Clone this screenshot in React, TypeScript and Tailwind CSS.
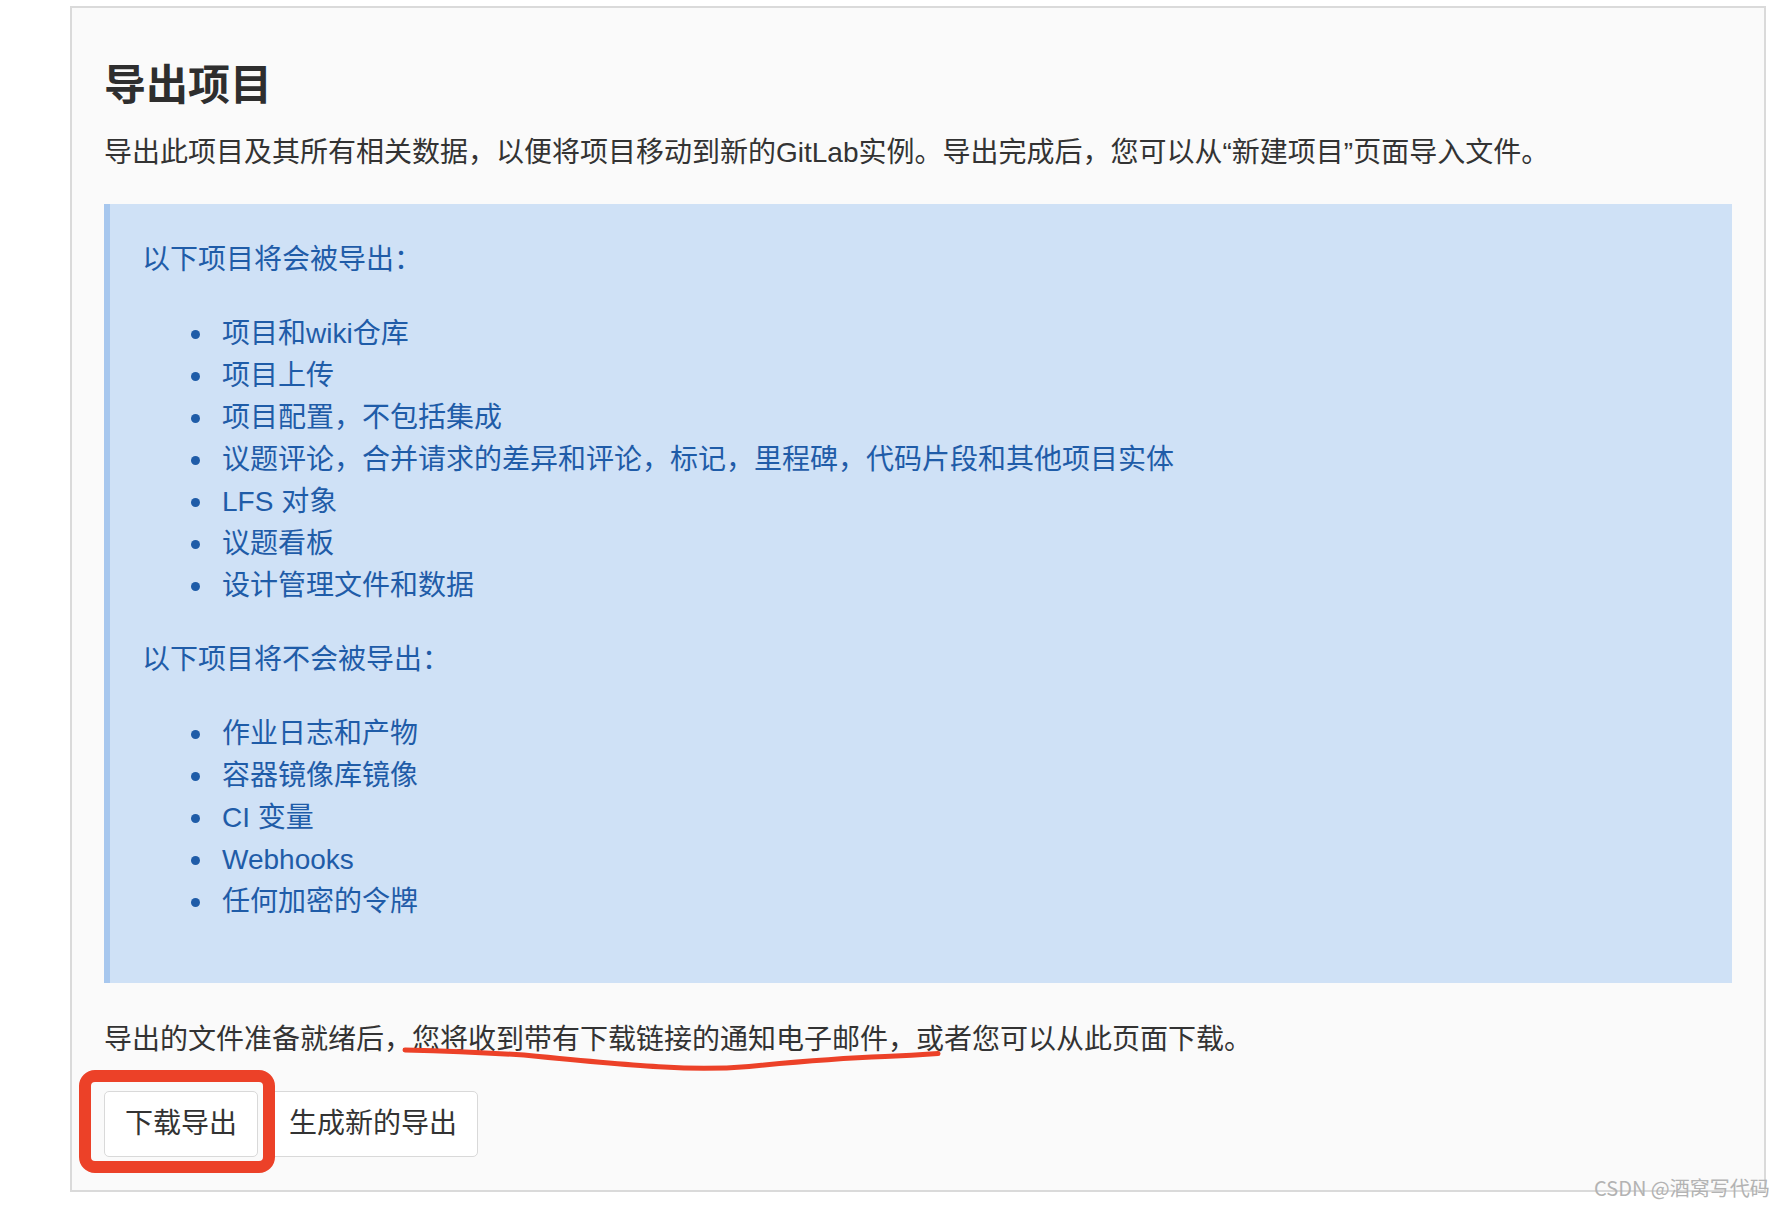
import React from "react";

const FONT = '"Liberation Sans", "Noto Sans CJK SC", sans-serif';

const exported = [
  "项目和wiki仓库",
  "项目上传",
  "项目配置，不包括集成",
  "议题评论，合并请求的差异和评论，标记，里程碑，代码片段和其他项目实体",
  "LFS 对象",
  "议题看板",
  "设计管理文件和数据",
];

const notExported = ["作业日志和产物", "容器镜像库镜像", "CI 变量", "Webhooks", "任何加密的令牌"];

function BulletList({ items }: { items: string[] }) {
  return (
    <ul className="mb-[32px]">
      {items.map((t) => (
        <li key={t} className="flex items-center h-[42px] leading-[42px]">
          <span className="ml-[49px] w-[9px] h-[9px] rounded-full bg-[#1f5ca8] shrink-0" />
          <span className="ml-[22px] whitespace-nowrap">{t}</span>
        </li>
      ))}
    </ul>
  );
}

export default function App() {
  return (
    <div className="relative w-[1782px] h-[1206px] bg-white" style={{ fontFamily: FONT }}>
      <div className="ml-[70px] mt-[6px] w-[1696px] border-2 border-[#dadada] bg-[#fafafa] pl-[32px] pr-[32px] pt-[54px] pb-[33px]">
        <h1 className="text-[42px] leading-[48px] font-bold text-[#2e2e2e]">导出项目</h1>
        <p className="mt-[22px] text-[28px] leading-[42px] text-[#333] whitespace-nowrap">
          导出此项目及其所有相关数据，以便将项目移动到新的GitLab实例。导出完成后，您可以从“新建项目”页面导入文件。
        </p>

        <div className="mt-[30px] bg-[#cfe1f6] border-l-[6px] border-[#a7c7ee] pl-[32px] pt-[35px] pb-[28px] text-[28px] leading-[42px] text-[#1f5ca8]">
          <p className="mb-[32px]">以下项目将会被导出：</p>
          <BulletList items={exported} />
          <p className="mb-[32px]">以下项目将不会被导出：</p>
          <BulletList items={notExported} />
        </div>

        <div className="relative mt-[36px]">
          <p className="text-[28px] leading-[42px] text-[#333] whitespace-nowrap">
            导出的文件准备就绪后，您将收到带有下载链接的通知电子邮件，或者您可以从此页面下载。
          </p>
          <svg
            className="absolute left-0 top-0 pointer-events-none"
            width="1000"
            height="60"
            viewBox="0 0 1000 60"
          >
            <path
              d="M301 31 C 340 32, 372 33, 420 36 C 470 41, 520 46, 560 48 C 590 50, 615 50, 645 47.5 C 690 43, 740 39, 781 37.5 C 805 36.5, 820 35.5, 834 34.5"
              fill="none"
              stroke="#ec4128"
              strokeWidth="5"
              strokeLinecap="round"
            />
          </svg>
        </div>

        <div className="relative mt-[30px] flex gap-[10px]">
          <button className="h-[66px] px-[20px] border border-[#d9d9d9] rounded-[5px] bg-white text-[28px] leading-[42px] text-[#333]">
            下载导出
          </button>
          <button className="h-[66px] px-[20px] border border-[#d9d9d9] rounded-[5px] bg-white text-[28px] leading-[42px] text-[#333]">
            生成新的导出
          </button>
          <div className="absolute left-[-25px] top-[-21px] w-[196px] h-[103px] border-[12px] border-[#ec4128] rounded-[16px] pointer-events-none" />
        </div>
      </div>

      <div
        className="absolute left-[1594px] top-[1168px] text-[20px] leading-[28px] text-[#b3b3b3] whitespace-nowrap"
        style={{ fontFamily: '"Noto Sans CJK SC", sans-serif' }}
      >
        CSDN @酒窝写代码
      </div>
    </div>
  );
}
